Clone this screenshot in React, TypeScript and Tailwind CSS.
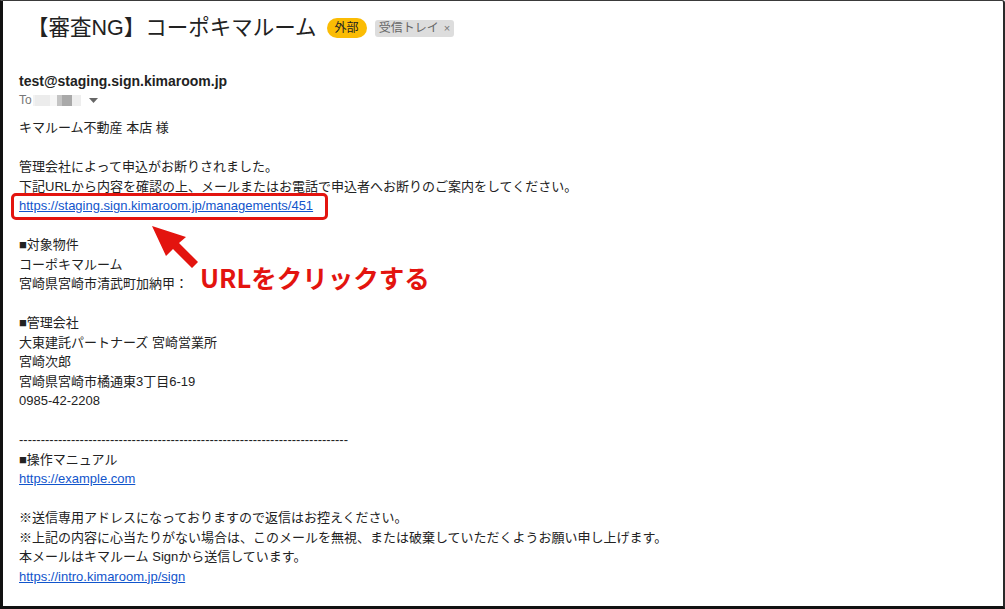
const bodyLines: { text: string; href?: string }[] = [
  { text: 'キマルーム不動産 本店 様' },
  { text: '' },
  { text: '管理会社によって申込がお断りされました。' },
  { text: '下記URLから内容を確認の上、メールまたはお電話で申込者へお断りのご案内をしてください。' },
  { text: 'https://staging.sign.kimaroom.jp/managements/451', href: '#' },
  { text: '' },
  { text: '■対象物件' },
  { text: 'コーポキマルーム' },
  { text: '宮崎県宮崎市清武町加納甲：' },
  { text: '' },
  { text: '■管理会社' },
  { text: '大東建託パートナーズ 宮崎営業所' },
  { text: '宮崎次郎' },
  { text: '宮崎県宮崎市橘通東3丁目6-19' },
  { text: '0985-42-2208' },
  { text: '' },
  { text: '----------------------------------------------------------------------------' },
  { text: '■操作マニュアル' },
  { text: 'https://example.com', href: '#' },
  { text: '' },
  { text: '※送信専用アドレスになっておりますので返信はお控えください。' },
  { text: '※上記の内容に心当たりがない場合は、このメールを無視、または破棄していただくようお願い申し上げます。' },
  { text: '本メールはキマルーム Signから送信しています。' },
  { text: 'https://intro.kimaroom.jp/sign', href: '#' },
]

const font = { fontFamily: '"Liberation Sans", "Noto Sans CJK JP", sans-serif' }

export default function App() {
  return (
    <div
      className="relative h-[609px] w-[1005px] overflow-hidden rounded-tr-[3px] border-t border-r-2 border-b-[3px] border-l-[3px] border-t-[#3a3a3a] border-r-[#2a2a2a] border-b-[#111] border-l-[#111] bg-white text-[#222]"
      style={font}
    >
      <div className="px-4">
        {/* subject */}
        <div className="mt-[13px] flex h-[28px] items-center">
          <h1 className="ml-[8px] text-[21.5px] leading-[28px] font-normal text-[#222]">【審査NG】コーポキマルーム</h1>
          <span className="ml-[10px] flex h-[20px] items-center rounded-full bg-[#fbbc04] px-[8px] text-[12px] text-[#222]">
            外部
          </span>
          <span className="ml-[8px] flex h-[17px] items-center rounded-[3px] bg-[#dddddd] px-[4px] text-[12px] text-[#666]">
            受信トレイ
            <span className="ml-[5px] text-[11px] text-[#777]">×</span>
          </span>
        </div>

        {/* sender */}
        <div className="mt-[29px] text-[14px] leading-[20px] font-bold text-[#222]">test@staging.sign.kimaroom.jp</div>
        <div className="flex h-[18px] items-center text-[12px] text-[#777]">
          <span>To</span>
          <span className="ml-[1px] h-[11px] w-[2px] bg-[#f2f2f2]" />
          <span className="h-[11px] w-[15px] bg-[#ececec]" />
          <span className="h-[11px] w-[7px] bg-[#f6f6f6]" />
          <span className="h-[11px] w-[5px] bg-[#c4c4c4]" />
          <span className="h-[11px] w-[10px] bg-[#a9a9a9]" />
          <span className="h-[11px] w-[9px] bg-[#eeeeee]" />
          <svg className="ml-[8px]" width="9" height="5" viewBox="0 0 9 5">
            <path d="M0 0h9L4.5 5z" fill="#666" />
          </svg>
        </div>

        {/* body */}
        <div className="mt-[9px] text-[13px] leading-[19.5px] text-[#222]">
          {bodyLines.map((line, i) =>
            line.href ? (
              <div key={i}>
                <a href={line.href} className="text-[#1155cc] underline">
                  {line.text}
                </a>
              </div>
            ) : (
              <div key={i} className="h-[19.5px] whitespace-pre">
                {line.text}
              </div>
            ),
          )}
        </div>
      </div>

      {/* annotation: box round the url */}
      <div className="absolute top-[192px] left-[8px] h-[27px] w-[317px] rounded-[5px] border-[3px] border-[#e3140f]" />

      {/* annotation: arrow */}
      <svg className="absolute top-0 left-0" width="1005" height="609" viewBox="0 0 1005 609">
        <path d="M152 226 L186 237 L179 243 L198 262 L192 268 L173 249 L166 256 Z" fill="#e3140f" transform="translate(-3 -1)" />
      </svg>

      <div
        className="absolute top-[259px] left-[197px] text-[25.5px] leading-[34px] font-bold text-[#e3140f]"
        style={{ fontFamily: '"Noto Sans CJK JP", sans-serif' }}
      >
        URLをクリックする
      </div>
    </div>
  )
}
